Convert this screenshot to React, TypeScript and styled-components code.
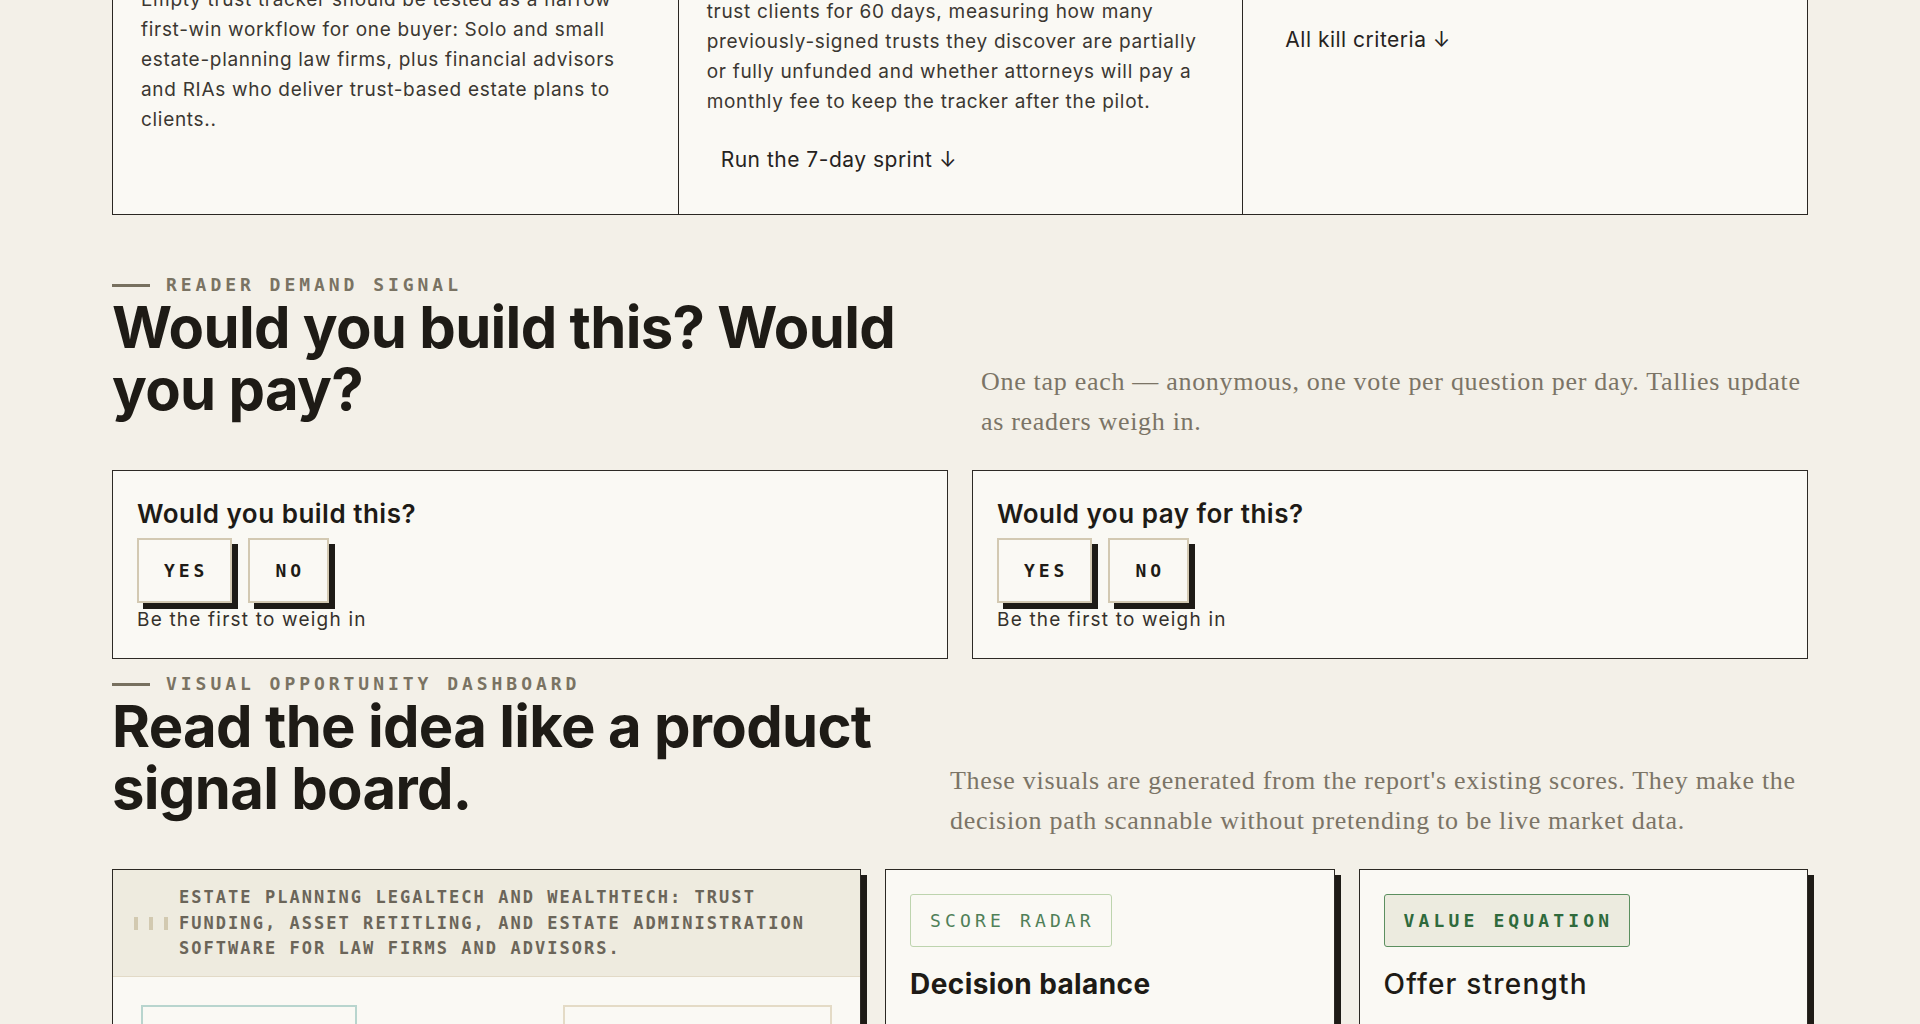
import styled, { createGlobalStyle } from 'styled-components';

const ink = '#1e1b16';
const mono = `'DejaVu Sans Mono', 'Liberation Mono', monospace`;
const serif = `'Liberation Serif', 'DejaVu Serif', serif`;

const GlobalStyle = createGlobalStyle`
   * { box-sizing: border-box; }
   html { overflow: hidden; }
   body {
      margin: 0;
      background: #f3f0e8;
      color: ${ink};
      font-family: Inter, 'Noto Sans', sans-serif;
   }
`;

interface TopCardData {
   kicker: string;
   title: string;
   lead?: string;
   body: string;
   link?: string;
}

const topCards: TopCardData[] = [
   {
      kicker: 'The wedge',
      title: 'Narrow first win, one buyer',
      body: 'Empty trust tracker should be tested as a narrow first-win workflow for one buyer: Solo and small estate-planning law firms, plus financial advisors and RIAs who deliver trust-based estate plans to clients..',
   },
   {
      kicker: 'Validation',
      title: 'The 7-day sprint',
      lead: 'Recruit five solo and small estate-planning firms and load the tracker with their existing',
      body: 'trust clients for 60 days, measuring how many previously-signed trusts they discover are partially or fully unfunded and whether attorneys will pay a monthly fee to keep the tracker after the pilot.',
      link: 'Run the 7-day sprint ↓',
   },
   {
      kicker: 'Stop signals',
      title: 'Kill criteria',
      body: 'Walk away if fewer than two firms surface an unfunded trust in week one, or if no firm will pay.',
      link: 'All kill criteria ↓',
   },
];

const polls = ['Would you build this?', 'Would you pay for this?'];

const App = () => {
   return (
      <Page>
         <GlobalStyle />
         <TopGrid>
            {topCards.map((card) => (
               <TopCard key={card.title}>
                  <CardKicker>{card.kicker}</CardKicker>
                  <CardTitle>{card.title}</CardTitle>
                  <CardBody>
                     {card.lead && (
                        <>
                           {card.lead}
                           <br />
                        </>
                     )}
                     {card.body}
                  </CardBody>
                  {card.link && <CardLink href='#'>{card.link}</CardLink>}
               </TopCard>
            ))}
         </TopGrid>

         <Section $after={15}>
            <SectionHead>
               <HeadMain>
                  <Kicker>
                     <Dash />
                     Reader demand signal
                  </Kicker>
                  <Heading>Would you build this? Would you pay?</Heading>
               </HeadMain>
               <Lede $width={827}>
                  One tap each — anonymous, one vote per question per day.
                  Tallies update as readers weigh in.
               </Lede>
            </SectionHead>
            <PollGrid>
               {polls.map((q) => (
                  <PollCard key={q}>
                     <PollQuestion>{q}</PollQuestion>
                     <VoteRow>
                        <VoteButton>Yes</VoteButton>
                        <VoteButton>No</VoteButton>
                     </VoteRow>
                     <VoteNote>Be the first to weigh in</VoteNote>
                  </PollCard>
               ))}
            </PollGrid>
         </Section>

         <Section $after={0}>
            <SectionHead>
               <HeadMain>
                  <Kicker>
                     <Dash />
                     Visual opportunity dashboard
                  </Kicker>
                  <Heading>Read the idea like a product signal board.</Heading>
               </HeadMain>
               <Lede $width={858}>
                  These visuals are generated from the report's existing
                  scores. They make the decision path scannable without
                  pretending to be live market data.
               </Lede>
            </SectionHead>
            <DashGrid>
               <DashCard>
                  <MarketHead>
                     <Bars>
                        <Bar />
                        <Bar />
                        <Bar />
                     </Bars>
                     <MarketName>
                        Estate planning legaltech and wealthtech: trust
                        funding, asset retitling, and estate administration
                        software for law firms and advisors.
                     </MarketName>
                  </MarketHead>
                  <MarketBody>
                     <Tile $width={216} $border='#b8d5ce'>
                        <TileLabel>Opportunity</TileLabel>
                        <TileValue>8.1</TileValue>
                     </Tile>
                     <Tile $width={269} $border='#e4dbc6'>
                        <TileLabel>Execution risk</TileLabel>
                        <TileValue>Medium</TileValue>
                     </Tile>
                  </MarketBody>
               </DashCard>

               <DashCard $pad>
                  <Tag $border='#bdd4ae' $color='#4f8058'>
                     Score radar
                  </Tag>
                  <DashTitle $weight={700} $track={0.4}>
                     Decision balance
                  </DashTitle>
                  <Radar viewBox='0 0 200 200'>
                     <polygon
                        points='100,20 176,75 147,165 53,165 24,75'
                        fill='none'
                        stroke='#d9d0bb'
                     />
                     <polygon
                        points='100,40 160,80 135,150 60,145 45,82'
                        fill='rgba(79,128,88,0.18)'
                        stroke='#4f8058'
                        strokeWidth='2'
                     />
                  </Radar>
               </DashCard>

               <DashCard $pad>
                  <Tag
                     $border='#5b8f5f'
                     $color='#2f6a3c'
                     $bg='#ecebdf'
                     $bold
                  >
                     Value equation
                  </Tag>
                  <DashTitle $weight={500} $track={1.2}>
                     Offer strength
                  </DashTitle>
                  <EquationRow>Dream outcome × likelihood</EquationRow>
                  <EquationRow>÷ time delay × effort</EquationRow>
               </DashCard>
            </DashGrid>
         </Section>
      </Page>
   );
};

const Page = styled.div`
   padding: 0 112px;
`;

const TopGrid = styled.div`
   display: grid;
   grid-template-columns: repeat(3, 1fr);
   margin-top: -188px;
   margin-bottom: 60px;
   border: 1px solid #2a2722;
   background: #faf9f4;
`;

const TopCard = styled.div`
   display: flex;
   flex-direction: column;
   align-items: flex-start;
   padding: 28px 28px 32px;

   & + & {
      border-left: 1px solid #2a2722;
   }
`;

const CardKicker = styled.div`
   font-family: ${mono};
   font-size: 13px;
   line-height: 20px;
   letter-spacing: 0.2em;
   text-transform: uppercase;
   color: #7a7363;
   margin-bottom: 12px;
`;

const CardTitle = styled.h3`
   margin: 0 0 16px;
   font-size: 40px;
   line-height: 48px;
   font-weight: 700;
`;

const CardBody = styled.p`
   margin: 0;
   font-size: 19px;
   line-height: 30px;
   letter-spacing: 0.7px;
   color: #3b3731;
`;

const CardLink = styled.a`
   display: inline-flex;
   margin-top: 20px;
   padding: 8px 14px;
   font-size: 21px;
   line-height: 1.4;
   letter-spacing: 0.5px;
   color: #26231e;
   text-decoration: none;
`;

const Section = styled.section<{ $after: number }>`
   margin-bottom: ${({ $after }) => $after}px;
`;

const SectionHead = styled.div`
   display: flex;
   justify-content: space-between;
   align-items: flex-end;
   margin-bottom: 28px;
`;

const HeadMain = styled.div`
   flex: 0 0 830px;
`;

const Kicker = styled.div`
   display: flex;
   align-items: center;
   gap: 16px;
   margin-bottom: 1px;
   font-family: ${mono};
   font-size: 18px;
   font-weight: 700;
   line-height: 20px;
   letter-spacing: 0.22em;
   text-transform: uppercase;
   color: #7a7363;
`;

const Dash = styled.span`
   width: 38px;
   height: 3px;
   background: #77705f;
`;

const Heading = styled.h2`
   margin: 0 0 22px;
   font-size: 58px;
   line-height: 62px;
   font-weight: 700;
   letter-spacing: -0.012em;
   color: ${ink};
`;

const Lede = styled.p<{ $width: number }>`
   flex: 0 0 auto;
   width: ${({ $width }) => $width}px;
   margin: 0;
   font-family: ${serif};
   font-size: 26px;
   line-height: 40px;
   letter-spacing: 0.7px;
   color: #7b7466;
`;

const PollGrid = styled.div`
   display: grid;
   grid-template-columns: 1fr 1fr;
   gap: 24px;
`;

const PollCard = styled.div`
   display: flex;
   flex-direction: column;
   align-items: flex-start;
   padding: 27px 24px 26px;
   border: 1px solid #2d2a25;
   background: #faf9f4;
`;

const PollQuestion = styled.h4`
   margin: 0 0 8px;
   font-size: 26px;
   line-height: 1.2;
   font-weight: 600;
   letter-spacing: 0.5px;
`;

const VoteRow = styled.div`
   display: flex;
   gap: 16px;
`;

const VoteButton = styled.button`
   height: 65px;
   padding: 0 22px 0 25px;
   border: 2px solid #d3c9b2;
   background: #faf9f4;
   box-shadow: 6px 6px 0 ${ink};
   font-family: ${mono};
   font-size: 18px;
   font-weight: 700;
   letter-spacing: 0.22em;
   text-transform: uppercase;
   color: ${ink};
   cursor: pointer;
`;

const VoteNote = styled.div`
   margin-top: 4px;
   font-size: 19px;
   line-height: 1.35;
   letter-spacing: 1.2px;
   color: #35312b;
`;

const DashGrid = styled.div`
   display: grid;
   grid-template-columns: 5fr 3fr 3fr;
   gap: 24px;
   align-items: start;
`;

const DashCard = styled.div<{ $pad?: boolean }>`
   display: flex;
   flex-direction: column;
   align-items: flex-start;
   padding: ${({ $pad }) => ($pad ? '24px' : '0')};
   border: 1px solid #2b2823;
   background: #faf9f4;
   box-shadow: 6px 6px 0 ${ink};
`;

const MarketHead = styled.div`
   align-self: stretch;
   display: flex;
   align-items: center;
   gap: 11px;
   padding: 15px 20px 14px 21px;
   background: #eeebdf;
   border-bottom: 1px solid #e2dac7;
`;

const Bars = styled.div`
   display: flex;
   gap: 11px;
   flex: 0 0 auto;
`;

const Bar = styled.span`
   width: 4px;
   height: 13px;
   background: #d2c9b0;
`;

const MarketName = styled.div`
   font-family: ${mono};
   font-size: 17px;
   font-weight: 700;
   line-height: 25.5px;
   letter-spacing: 0.12em;
   text-transform: uppercase;
   color: #6b6559;
`;

const MarketBody = styled.div`
   align-self: stretch;
   display: flex;
   justify-content: space-between;
   padding: 28px;
`;

const Tile = styled.div<{ $width: number; $border: string }>`
   width: ${({ $width }) => $width}px;
   padding: 24px 20px;
   border: 2px solid ${({ $border }) => $border};
`;

const TileLabel = styled.div`
   font-family: ${mono};
   font-size: 13px;
   letter-spacing: 0.15em;
   text-transform: uppercase;
   color: #7a7363;
`;

const TileValue = styled.div`
   margin-top: 8px;
   font-size: 36px;
   font-weight: 700;
`;

const Tag = styled.span<{
   $border: string;
   $color: string;
   $bg?: string;
   $bold?: boolean;
}>`
   display: inline-flex;
   align-items: center;
   height: 53px;
   padding: 0 16px 0 19px;
   border: 1px solid ${({ $border }) => $border};
   border-radius: 3px;
   background: ${({ $bg }) => $bg || 'transparent'};
   font-family: ${mono};
   font-size: 18px;
   font-weight: ${({ $bold }) => ($bold ? 700 : 400)};
   letter-spacing: 0.23em;
   text-transform: uppercase;
   color: ${({ $color }) => $color};
`;

const DashTitle = styled.h4<{ $weight: number; $track: number }>`
   margin: 20px 0 0;
   font-size: 28px;
   line-height: 35px;
   font-weight: ${({ $weight }) => $weight};
   letter-spacing: ${({ $track }) => $track}px;
   color: ${ink};
`;

const Radar = styled.svg`
   width: 200px;
   height: 200px;
   margin-top: 24px;
`;

const EquationRow = styled.div`
   margin-top: 24px;
   font-family: ${mono};
   font-size: 15px;
   color: #4a463e;
`;

export default App;
